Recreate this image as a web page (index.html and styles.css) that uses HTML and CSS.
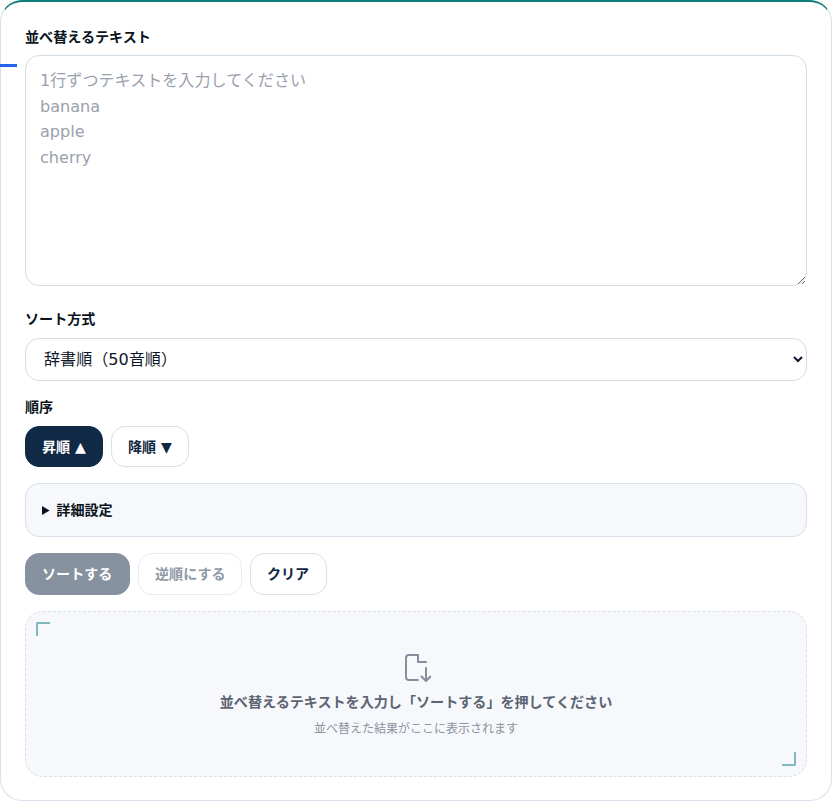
FILE: index.html
```html
<!DOCTYPE html>
<html lang="ja">
<head>
<meta charset="utf-8">
<title>テキスト並べ替え</title>
<link rel="stylesheet" href="styles.css">
</head>
<body>
<main class="card">
  <span class="accent"></span>
  <div class="field first">
    <label class="label" for="src">並べ替えるテキスト</label>
    <textarea id="src" class="input textarea" rows="8" placeholder="1行ずつテキストを入力してください&#10;banana&#10;apple&#10;cherry"></textarea>
  </div>
  <div class="field method">
    <label class="label" for="mode">ソート方式</label>
    <select id="mode" class="input select"><option>辞書順（50音順）</option></select>
  </div>
  <div class="field order">
    <span class="label">順序</span>
    <div class="row">
      <button class="btn small-btn active">昇順 ▲</button>
      <button class="btn small-btn">降順 ▼</button>
    </div>
  </div>
  <details class="details"><summary>詳細設定</summary></details>
  <div class="row actions">
    <button class="btn wide primary">ソートする</button>
    <button class="btn disabled">逆順にする</button>
    <button class="btn wide">クリア</button>
  </div>
  <section class="empty">
    <span class="corner tl"></span>
    <span class="corner br"></span>
    <svg class="icon" viewBox="0 0 26 28" width="26" height="28" fill="none" stroke="#868e9b" stroke-width="2" stroke-linecap="round" stroke-linejoin="round">
      <path d="M13 26H4a3 3 0 0 1-3-3V4a3 3 0 0 1 3-3h9v7h8"/>
      <path d="M21 14v12.500M16.500 22.500l4.500 4.500 4.500-4.500"/>
    </svg>
    <p class="empty-title">並べ替えるテキストを入力し「ソートする」を押してください</p>
    <p class="empty-sub">並べ替えた結果がここに表示されます</p>
  </section>
</main>
</body>
</html>
```
FILE: styles.css
```css
* { box-sizing: border-box; }
html, body { margin: 0; padding: 0; background: #fff; }
body {
  font-family: "DejaVu Sans", "Noto Sans CJK JP", sans-serif;
  color: #0f172a;
  height: 802px;
  overflow: hidden;
}
.card {
  position: relative;
  height: 801px;
  padding: 25px 24px 0;
  background: #fff;
  border: 1px solid #d8e0ec;
  border-top: 2px solid #0f7c7c;
  border-radius: 22px;
}
.accent {
  position: absolute;
  left: -1px;
  top: 62px;
  width: 17px;
  height: 3px;
  background: #2563eb;
}
.field { margin-bottom: 16px; }
.first { margin-bottom: 23px; }
.label {
  display: block;
  font-size: 14.08px;
  line-height: 20px;
  font-weight: 700;
  color: #0b1320;
  margin-bottom: 9px;
}
.first .label { margin-bottom: 8px; }
.input {
  display: block;
  width: 100%;
  font-family: inherit;
  font-size: 16.08px;
  color: #0f172a;
  background: #fff;
  border: 1px solid #d3dde7;
  border-radius: 14px;
}
.textarea {
  height: 231px;
  padding: 12px 14px;
  line-height: 25.6px;
  resize: vertical;
}
.textarea::placeholder { color: #9aa1ad; opacity: 1; }
.select {
  height: 43px;
  padding: 0 14px;
}
.row { display: flex; gap: 8px; }
.btn {
  font-family: inherit;
  font-size: 14.08px;
  font-weight: 700;
  height: 42px;
  padding: 0 16px 2px;
  color: #0f2540;
  background: #fff;
  border: 1px solid #d8e0ea;
  border-radius: 14px;
}
.small-btn { height: 41px; }
.wide { padding-right: 16.6px; }
.active { background: #102a46; border-color: #102a46; color: #fff; }
.primary { background: #8792a0; border-color: #8792a0; color: #fff; }
.disabled { color: #8f98a5; border-color: #e8ecf2; padding-right: 15.4px; }
.details {
  height: 54px;
  background: #f6f8fb;
  border: 1px solid #d8e0ea;
  border-radius: 14px;
  padding: 0 16px;
  margin-bottom: 16px;
}
.details summary {
  font-size: 14.08px;
  font-weight: 700;
  line-height: 52px;
  color: #0b1320;
}
.details summary::marker { font-size: 13.5px; }
.actions { margin-bottom: 16px; }
.empty {
  position: relative;
  height: 166px;
  background: #f6f8fb;
  border: 1px dashed #d8e0ea;
  border-radius: 18px;
  display: flex;
  flex-direction: column;
  align-items: center;
  padding-top: 42px;
}
.corner {
  position: absolute;
  width: 14px;
  height: 14px;
  border: 0 solid #7fb9c0;
}
.tl { left: 10px; top: 10px; border-top-width: 2px; border-left-width: 2px; border-top-left-radius: 2px; }
.br { right: 10px; bottom: 10px; border-bottom-width: 2px; border-right-width: 2px; border-bottom-right-radius: 2px; }
.icon { display: block; margin: 0 0 9px 4px; }
.empty-title {
  margin: 0 0 6px;
  font-size: 14.08px;
  line-height: 22px;
  font-weight: 700;
  color: #5b6472;
}
.empty-sub {
  margin: 0;
  font-size: 12px;
  line-height: 20px;
  color: #8a93a0;
}
```
